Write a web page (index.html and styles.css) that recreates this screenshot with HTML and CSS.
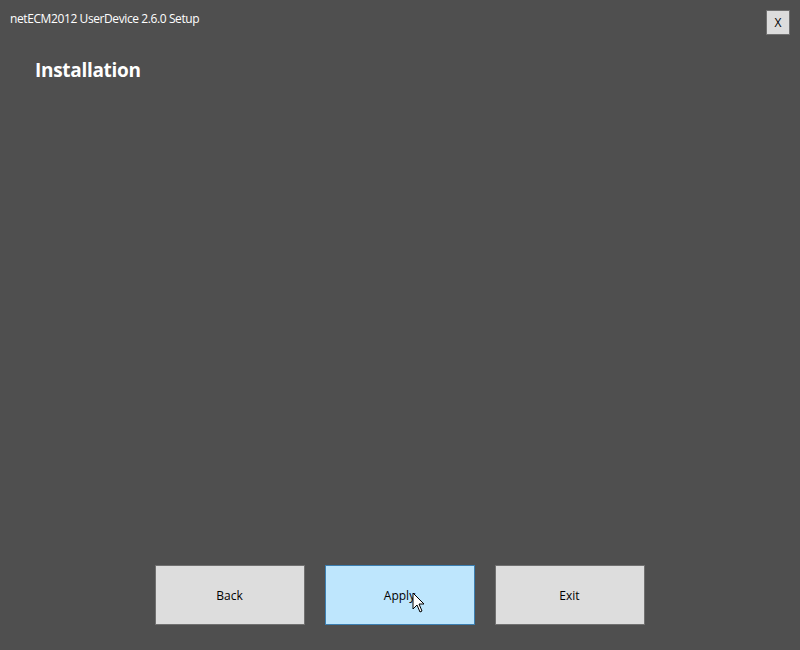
FILE: index.html
```html
<!DOCTYPE html>
<html>
<head>
<meta charset="utf-8">
<link rel="stylesheet" href="styles.css">
</head>
<body>
<div class="window">
  <div class="titlebar">
    <span class="title">netECM2012 UserDevice 2.6.0 Setup</span>
    <button class="close">X</button>
  </div>
  <h1 class="heading">Installation</h1>
  <div class="content"></div>
  <div class="actions">
    <button class="btn">Back</button>
    <button class="btn btn-hover">Apply
      <svg class="cursor" width="14" height="22" viewBox="0 0 14 22">
        <path d="M1 1 L1 17 L5 13 L8 20 L10 19 L7 12 L12 12 Z" fill="#fff" stroke="#000" stroke-width="1" stroke-linejoin="miter"/>
      </svg>
    </button>
    <button class="btn">Exit</button>
  </div>
</div>
</body>
</html>
```
FILE: styles.css
```css
html, body {
  margin: 0;
  padding: 0;
  background: #4f4f4f;
}
.window {
  width: 800px;
  height: 650px;
  display: flex;
  flex-direction: column;
  font-family: "Open Sans", "Noto Sans", sans-serif;
}
.titlebar {
  display: flex;
  justify-content: space-between;
  align-items: flex-start;
  padding: 10px 10px 0 10px;
  height: 26px;
}
.title {
  color: #ffffff;
  font-size: 12px;
  line-height: 16px;
  letter-spacing: -0.4px;
  margin-top: 1px;
}
.close {
  width: 24px;
  height: 25px;
  margin: 0;
  padding: 0;
  background: #dcdcdc;
  border: 1px solid #707070;
  font-family: "Open Sans", "Noto Sans", sans-serif;
  font-size: 12px;
  color: #000;
}
.heading {
  margin: 21px 0 0 35px;
  color: #ffffff;
  font-size: 19px;
  line-height: 26px;
  font-weight: bold;
  letter-spacing: -0.3px;
}
.content {
  flex: 1;
}
.actions {
  display: flex;
  justify-content: center;
  gap: 20px;
  padding-bottom: 25px;
  padding-right: 1px;
}
.btn {
  position: relative;
  width: 150px;
  height: 60px;
  margin: 0;
  padding: 0;
  background: #dddddd;
  border: 1px solid #707070;
  font-family: "Open Sans", "Noto Sans", sans-serif;
  font-size: 12px;
  color: #000;
}
.btn-hover {
  background: #bee6fd;
  border-color: #3c7fb1;
}
.cursor {
  position: absolute;
  left: 86px;
  top: 26px;
}
```
